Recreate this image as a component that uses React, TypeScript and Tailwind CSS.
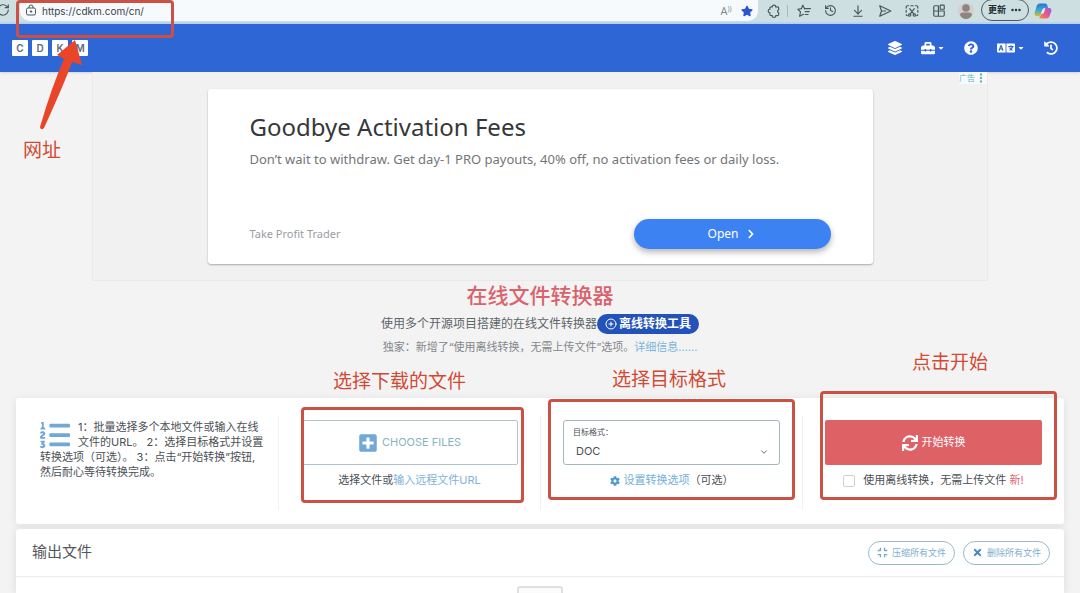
import type { ReactNode } from "react";
import {
  FaChevronRight,
  FaCog,
  FaCompress,
  FaHistory,
  FaLanguage,
  FaLayerGroup,
  FaListOl,
  FaPlusSquare,
  FaQuestionCircle,
  FaStar,
  FaSync,
  FaTimes,
  FaToolbox,
  FaCaretDown,
} from "react-icons/fa";
import {
  ArrowDownToLine,
  ChevronDown,
  CirclePlus,
  Ellipsis,
  EllipsisVertical,
  History,
  RotateCw,
} from "lucide-react";

const LockIcon = () => (
  <svg
    viewBox="0 0 24 24"
    className="mb-px size-3 shrink-0"
    fill="none"
    stroke="currentColor"
    strokeWidth="2"
  >
    <rect x="3" y="8" width="18" height="14" rx="3" />
    <path d="M8 8V6q0-4 4-4t4 4v2" />
    <circle cx="12" cy="15" r="1.500" fill="currentColor" />
  </svg>
);

const ExtensionIcon = () => (
  <svg
    viewBox="0 0 24 24"
    className="size-[14px]"
    fill="none"
    stroke="currentColor"
    strokeWidth="2"
    strokeLinejoin="round"
  >
    <path d="M9 5a3 3 0 0 1 6 0h3q2 0 2 2v3a2.600 2.600 0 0 0 0 5v3q0 2-2 2h-3a3 3 0 0 1-6 0H7q-2 0-2-2v-3a3 3 0 0 1 0-6V7q0-2 2-2Z" />
  </svg>
);

const SendIcon = () => (
  <svg
    viewBox="0 0 24 24"
    className="size-[14px]"
    fill="none"
    stroke="currentColor"
    strokeWidth="2"
    strokeLinejoin="round"
  >
    <path d="M3 3 22 12 3 21 6 12ZM6 12h8" />
  </svg>
);

const FavoritesIcon = () => (
  <svg
    viewBox="0 0 24 24"
    className="size-[14px]"
    fill="none"
    stroke="currentColor"
    strokeWidth="2"
    strokeLinecap="round"
    strokeLinejoin="round"
  >
    <path d="M13 8 10 2 7.500 8 1.500 9 6 13.500 4.500 21 11 17.500" />
    <path d="M13 8h10M14 13h7M14 18h5" />
  </svg>
);

const ScreenshotIcon = () => (
  <svg
    viewBox="0 0 24 24"
    className="size-[14px]"
    fill="none"
    stroke="currentColor"
    strokeWidth="2"
    strokeLinecap="round"
  >
    <path d="M2 7V5q0-2 2-2h2M10 3h4M18 3h2q2 0 2 2v2M22 11v3M22 18q0 2-2 2M2 11v3M2 18q0 2 2 2" />
    <path d="m8 8 7 9M16 8l-7 9" />
    <circle cx="8" cy="19" r="2" />
    <circle cx="16" cy="19" r="2" />
  </svg>
);

const AppsIcon = () => (
  <svg
    viewBox="0 0 24 24"
    className="size-[14px]"
    fill="none"
    stroke="currentColor"
    strokeWidth="2"
    strokeLinejoin="round"
  >
    <path d="M11 3H5q-2 0-2 2v14q0 2 2 2h14q2 0 2-2v-7H3M11 3v18" />
    <rect x="14" y="2" width="7" height="7" rx="1" />
  </svg>
);

const AvatarIcon = () => (
  <svg viewBox="0 0 16 16" className="size-4">
    <circle cx="8" cy="8" r="8" fill="#d3cfcd" />
    <circle cx="8" cy="5" r="3.800" fill="#8f8483" />
    <path d="M2 12q0-2.500 3-2.500h6q3 0 3 2.500-2 4-6 4t-6-4" fill="#8f8483" />
  </svg>
);

const CopilotIcon = () => (
  <svg viewBox="0 0 24 24" className="size-[18px]">
    <defs>
      <linearGradient id="cool" x1="0" y1="0" x2="0" y2="1">
        <stop offset="0" stopColor="#2f6fe0" />
        <stop offset="0.600" stopColor="#3fb6c4" />
        <stop offset="1" stopColor="#f0b429" />
      </linearGradient>
      <linearGradient id="warm" x1="1" y1="0" x2="0" y2="1">
        <stop offset="0" stopColor="#8d5be8" />
        <stop offset="0.500" stopColor="#e8578f" />
        <stop offset="1" stopColor="#f58a4b" />
      </linearGradient>
    </defs>
    <path
      d="M8 2h7q2 0 3 3l1 3h-4q-3 0-4 4l-1 4q-1 3-4 3H4q-4 0-3-5l2-7q1-5 5-5Z"
      fill="url(#cool)"
    />
    <path
      d="M16 22H9q-2 0-2-2 2 0 3-4l1-4q1-4 5-4h4q4 0 3 5l-2 5q-1 4-5 4Z"
      fill="url(#warm)"
    />
    <path d="m12 9 3-1-2 7-4 1Z" fill="#eef4f4" />
  </svg>
);

const BrowserButton = ({
  label,
  children,
}: {
  label: string;
  children: ReactNode;
}) => (
  <button
    type="button"
    aria-label={label}
    className="flex h-5 w-[27px] shrink-0 items-center justify-center"
  >
    {children}
  </button>
);

const BrowserBar = () => (
  <div className="flex h-6 shrink-0 items-start border-b-2 border-[#b9d5f3] bg-[#cddfe1] pr-6 text-[#48565a]">
    <button
      type="button"
      aria-label="刷新"
      className="-ml-1 flex h-5 w-6 shrink-0 items-center"
    >
      <RotateCw className="size-[14px]" />
    </button>
    <div className="flex h-[21px] min-w-0 flex-1 items-center rounded-b-[10px] bg-[#f6fafc] pl-[5px]">
      <LockIcon />
      <input
        aria-label="地址"
        defaultValue="https://cdkm.com/cn/"
        className="ml-[5px] h-5 min-w-0 flex-1 bg-transparent font-[Inter,'Noto_Sans_CJK_SC',sans-serif] text-[10px] text-[#3b444a] outline-none"
      />
      <button
        type="button"
        aria-label="朗读"
        className="flex h-5 w-5 items-start justify-center pt-1 font-['Open_Sans',sans-serif] text-[11px] leading-3 text-[#7b858a]"
      >
        A<span className="text-[7px] leading-2">))</span>
      </button>
      <button
        type="button"
        aria-label="收藏"
        className="flex h-5 w-[22px] items-center justify-center text-[#2b56cf]"
      >
        <FaStar className="size-3" />
      </button>
    </div>
    <div className="ml-[2px] flex shrink-0 items-center">
      <BrowserButton label="扩展">
        <ExtensionIcon />
      </BrowserButton>
      <span className="h-3 w-px bg-[#a9b9bc]" />
      <span className="w-[2px]" />
      <BrowserButton label="收藏夹">
        <FavoritesIcon />
      </BrowserButton>
      <BrowserButton label="历史记录">
        <History className="size-[13px]" />
      </BrowserButton>
      <BrowserButton label="下载">
        <ArrowDownToLine className="size-[14px]" />
      </BrowserButton>
      <BrowserButton label="发送">
        <SendIcon />
      </BrowserButton>
      <BrowserButton label="截图">
        <ScreenshotIcon />
      </BrowserButton>
      <BrowserButton label="应用">
        <AppsIcon />
      </BrowserButton>
      <BrowserButton label="个人资料">
        <AvatarIcon />
      </BrowserButton>
      <button
        type="button"
        className="-mt-px ml-0.5 flex h-[22px] w-12 items-center justify-center gap-1 rounded-full border border-[#4c595d] text-[9px] font-bold text-[#252f33]"
      >
        更新
        <Ellipsis className="size-3" strokeWidth={3} />
      </button>
      <BrowserButton label="Copilot">
        <CopilotIcon />
      </BrowserButton>
    </div>
  </div>
);

const Header = () => (
  <header className="flex h-12 shrink-0 items-center justify-between bg-[#2f66d6] pr-[22px] pl-3 text-white shadow">
    <a href="#home" className="flex gap-1">
      {["C", "D", "K", "M"].map((letter) => (
        <span
          key={letter}
          className="flex size-4 items-center justify-center rounded-[1px] bg-white text-[10px] font-semibold text-[#5b6a83]"
        >
          {letter}
        </span>
      ))}
    </a>
    <nav className="flex items-center gap-[19px]">
      <a href="#layers" aria-label="格式">
        <FaLayerGroup className="size-[14px]" />
      </a>
      <a href="#tools" aria-label="工具" className="flex items-center gap-0.5">
        <FaToolbox className="size-[14px]" />
        <FaCaretDown className="size-2" />
      </a>
      <a href="#help" aria-label="帮助">
        <FaQuestionCircle className="size-[14px]" />
      </a>
      <a
        href="#language"
        aria-label="语言"
        className="flex items-center gap-0.5"
      >
        <FaLanguage className="size-[18px]" />
        <FaCaretDown className="size-2" />
      </a>
      <a href="#history" aria-label="历史">
        <FaHistory className="size-[14px]" />
      </a>
    </nav>
  </header>
);

const AdBanner = () => (
  <aside className="relative mx-auto w-5/6 max-w-[896px] shrink-0 border-x border-b border-[#eaeaea] bg-[#f1f1f1] pt-[17px] pb-4">
    <div className="absolute top-0 right-0 flex h-3 items-center bg-[#f8fafa] text-[8px] leading-3 text-[#5eb5c6]">
      广告
      <EllipsisVertical className="size-3" strokeWidth={3} />
    </div>
    <div className="mx-auto flex h-[175px] w-3/4 max-w-[665px] flex-col justify-between rounded-[3px] bg-white px-[42px] pt-5 pb-[15px] font-['Noto_Sans',sans-serif] shadow-[0_1px_2px_rgba(0,0,0,0.3)]">
      <div>
        <h2 className="text-2xl leading-9 font-normal text-[#35383b]">
          Goodbye Activation Fees
        </h2>
        <p className="mt-1 text-[13px] leading-5 text-[#737679]">
          Don’t wait to withdraw. Get day-1 PRO payouts, 40% off, no activation
          fees or daily loss.
        </p>
      </div>
      <div className="flex items-center justify-between">
        <span className="text-[11px] text-[#999c9f]">Take Profit Trader</span>
        <button
          type="button"
          className="flex h-[30px] w-[197px] items-center justify-center gap-2 rounded-full bg-[#3c82f3] text-xs text-white shadow-[0_3px_6px_rgba(0,0,0,0.3)]"
        >
          Open
          <FaChevronRight className="size-[10px]" />
        </button>
      </div>
    </div>
  </aside>
);

const Intro = () => (
  <section className="shrink-0 pt-px text-center">
    <h1 className="text-[21px] leading-7 font-medium text-[#d9626c]">
      在线文件转换器
    </h1>
    <p className="mt-1 flex h-5 items-center justify-center text-xs text-[#5e646a]">
      使用多个开源项目搭建的在线文件转换器
      <a
        href="#offline"
        className="flex h-5 items-center gap-0.5 rounded-full bg-[#2353b8] px-2 font-bold text-white"
      >
        <CirclePlus className="size-3" />
        离线转换工具
      </a>
    </p>
    <p className="mt-[3px] text-[11px] leading-5 text-[#83888c]">
      独家：新增了“使用离线转换，无需上传文件”选项。
      <a href="#details" className="text-[#79b5dd]">
        详细信息......
      </a>
    </p>
  </section>
);

// red marks over the page
const markBox =
  "pointer-events-none absolute rounded-[4px] border-[3px] border-[#cb5145]";
const markText =
  "pointer-events-none absolute whitespace-nowrap text-[19px] leading-6 text-[#d14a35]";

const ConvertPanel = () => (
  <section className="mx-4 grid shrink-0 grid-cols-4 rounded-[3px] bg-white pt-[18px] pb-[14px] text-[11px] leading-[15px] text-[#4b5055] shadow-[0_1px_8px_rgba(0,0,0,0.08)]">
    <div className="h-[94px] py-1 pl-6">
      <FaListOl className="float-left mr-2 size-[30px] text-[#70a8d6]" />
      <p className="whitespace-nowrap">
        1：批量选择多个本地文件或输入在线
        <br />
        文件的URL。 2：选择目标格式并设置
        <br />
        转换选项（可选）。 3：点击“开始转换”按钮,
        <br />
        然后耐心等待转换完成。
      </p>
    </div>

    <div className="relative border-l border-[#f1f1f1] px-[22px] pt-1">
      <button
        type="button"
        className="flex h-[45px] w-full items-center justify-center gap-1 rounded-[2px] border border-[#b3c3cd] text-[#86b3bf]"
      >
        <FaPlusSquare className="size-5 text-[#70a8d6]" />
        CHOOSE FILES
      </button>
      <p className="mt-2 text-center">
        选择文件或
        <a href="#url" className="text-[#7fb2da]">
          输入远程文件URL
        </a>
      </p>
      <div className={`${markBox} -top-[9px] right-4 bottom-[7px] left-[22px]`} />
      <span className={`${markText} -top-[46px] left-[54px]`}>
        选择下载的文件
      </span>
    </div>

    <div className="relative border-l border-[#f1f1f1] px-[22px] pt-1">
      <div className="relative h-[45px] rounded-[3px] border border-[#a4b7bd]">
        <label
          htmlFor="format"
          className="absolute top-[5px] left-[9px] text-[8px] leading-3"
        >
          目标格式：
        </label>
        <select
          id="format"
          className="h-full w-full appearance-none bg-transparent pt-[18px] pl-3 text-[11px]"
        >
          <option>DOC</option>
          <option>PDF</option>
        </select>
        <ChevronDown className="pointer-events-none absolute right-[10px] bottom-[7px] size-[10px]" />
      </div>
      <p className="mt-2 flex items-center justify-center">
        <a href="#options" className="flex items-center gap-1 text-[#72b0da]">
          <FaCog className="size-[10px] text-[#4a9bd1]" />
          设置转换选项
        </a>
        （可选）
      </p>
      <div className={`${markBox} -top-[17px] right-[7px] bottom-[10px] left-[7px]`} />
      <span className={`${markText} -top-12 left-[71px]`}>选择目标格式</span>
    </div>

    <div className="relative border-l border-[#f1f1f1] px-[22px] pt-1">
      <button
        type="button"
        className="flex h-[45px] w-full items-center justify-center gap-1 rounded-[2px] bg-[#de6166] text-white"
      >
        <FaSync className="size-4" />
        开始转换
      </button>
      <label className="mt-2 flex items-center justify-center gap-2 whitespace-nowrap">
        <input
          type="checkbox"
          className="size-3 appearance-none rounded-[2px] border border-[#cdd1d3] bg-white"
        />
        <span>
          使用离线转换，无需上传文件 <span className="text-[#df6775]">新!</span>
        </span>
      </label>
      <div className={`${markBox} -top-[25px] right-[7px] bottom-[10px] left-[17px]`} />
      <span className={`${markText} -top-[65px] left-[109px]`}>点击开始</span>
    </div>
  </section>
);

const OutputPanel = () => (
  <section className="mx-4 mt-[5px] flex min-h-16 flex-1 flex-col items-center rounded-t-[3px] bg-white shadow-[0_1px_8px_rgba(0,0,0,0.1)]">
    <div className="flex h-12 w-full shrink-0 items-center justify-between border-b border-[#ededed] pr-[14px] pl-4">
      <h2 className="text-[15px] text-[#53585c]">输出文件</h2>
      <div className="flex gap-2 text-[9px] text-[#80afd2]">
        <button
          type="button"
          className="flex h-6 items-center gap-1 rounded-full border border-[#9bbac9] px-2"
        >
          <FaCompress className="size-[11px] text-[#76a9c4]" />
          压缩所有文件
        </button>
        <button
          type="button"
          className="flex h-6 items-center gap-1 rounded-full border border-[#9bbac9] px-2"
        >
          <FaTimes className="size-[11px] text-[#4586c4]" />
          删除所有文件
        </button>
      </div>
    </div>
    <div className="mt-[9px] h-6 w-[46px] shrink-0 rounded-[3px] border-2 border-[#e0e0e0] bg-[#fbfbfb]" />
  </section>
);

const App = () => {
  return (
    <div className="relative flex h-screen flex-col overflow-hidden bg-[#f3f3f3] font-[Inter,'Noto_Sans_CJK_SC',sans-serif]">
      <BrowserBar />
      <Header />
      <AdBanner />
      <Intro />
      <div className="h-[41px] shrink-0" />
      <ConvertPanel />
      <OutputPanel />

      <div className={`${markBox} top-0 left-4 h-[38px] w-[158px]`} />
      <svg
        viewBox="0 0 50 94"
        className="pointer-events-none absolute top-[38px] left-9 h-[94px] w-[50px]"
      >
        <path
          d="M39 2 46 27 36 24Q29 44 8 90q-3 3-4-1Q16 48 28 21L21 17Z"
          fill="#e84529"
        />
      </svg>
      <span className={`${markText} top-[139px] left-[23px]`}>网址</span>
    </div>
  );
};

export default App;
